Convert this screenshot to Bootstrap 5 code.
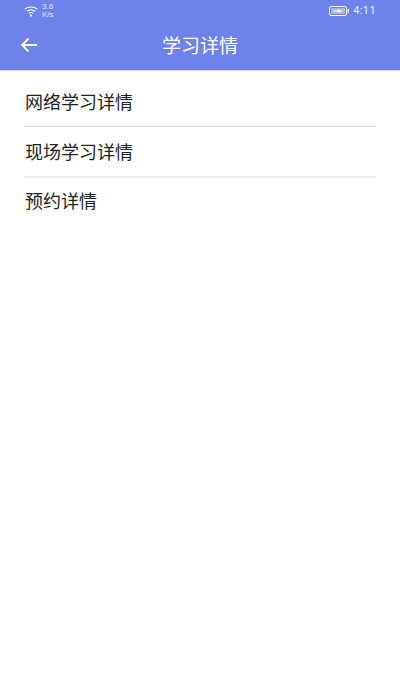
<!DOCTYPE html>
<html lang="zh"><head><meta charset="utf-8">
<link rel="stylesheet" href="https://cdn.jsdelivr.net/npm/bootstrap@5.3.0/dist/css/bootstrap.min.css">
<style>
html,body{height:700px;overflow:hidden;background:#fff;}
body{font-family:"Noto Sans CJK SC","Liberation Sans",sans-serif;}
.app-head{background:#6e82ea;height:70px;color:#fff;box-shadow:0 1px 0 #d8dcf0;}
.stat-bar{height:22px;padding:0 24px;}
.net-rate{font-size:8px;line-height:8px;font-family:"Liberation Sans",sans-serif;color:#e4e8fb;margin-left:4px;}
.clock{font-size:11px;font-family:"Roboto",sans-serif;color:#e8ebfc;margin-left:4px;letter-spacing:.4px;}
.title-row{height:48px;padding:0 20px;}
.page-title{font-size:19px;line-height:46px;width:100%;text-align:center;font-weight:400;}
.back-ico{left:20px;top:14px;}
.entries{padding:6px 24px 0;}
.entry{height:50px;padding:0 1px;font-size:18px;font-weight:400;color:#222;border:0;background:none;border-radius:0;}
.entry + .entry{border-top:1px solid #dcdcdc;}
.entry:last-child{border-top:2px solid #eaeaea;padding-bottom:3px;}
</style></head><body>
<header class="app-head">
  <div class="stat-bar d-flex align-items-center">
    <svg width="14" height="11" viewBox="0 0 14 11" fill="none" stroke="#fff" stroke-width="1.1"><path d="M.7 3.2C4.2.2 9.8.2 13.3 3.2"/><path d="M2.8 5.3c2.4-1.9 6-1.9 8.4 0"/><path d="M4.9 7.3c1.2-.9 3-.9 4.2 0"/><path d="M7 10.4V8.6" stroke-width="1.8"/></svg>
    <div class="net-rate">3.6<br>K/s</div>
    <div class="ms-auto d-flex align-items-center">
      <svg width="20" height="10" viewBox="0 0 20 10"><rect x=".5" y=".5" width="17" height="9" rx="1.5" fill="none" stroke="#fff"/><rect x="2" y="2" width="14" height="6" fill="#a9b5f2"/><path d="M4.5 5h9M10 3.2 8 5h4L10 6.8" stroke="#fff" fill="none" stroke-width=".9"/><rect x="18.6" y="3" width="1.2" height="4" fill="#fff"/></svg>
      <span class="clock">4:11</span>
    </div>
  </div>
  <div class="title-row position-relative">
    <svg class="back-ico position-absolute" width="18" height="18" viewBox="0 0 18 18" fill="none" stroke="#fff" stroke-width="1.8"><path d="M17 9H2M8.5 2.5 2 9l6.5 6.5"/></svg>
    <div class="page-title">学习详情</div>
  </div>
</header>
<main class="entries list-group list-group-flush">
  <div class="entry list-group-item d-flex align-items-center">网络学习详情</div>
  <div class="entry list-group-item d-flex align-items-center">现场学习详情</div>
  <div class="entry list-group-item d-flex align-items-center">预约详情</div>
</main>
<script src="https://cdn.jsdelivr.net/npm/bootstrap@5.3.0/dist/js/bootstrap.bundle.min.js"></script>
</body></html>
